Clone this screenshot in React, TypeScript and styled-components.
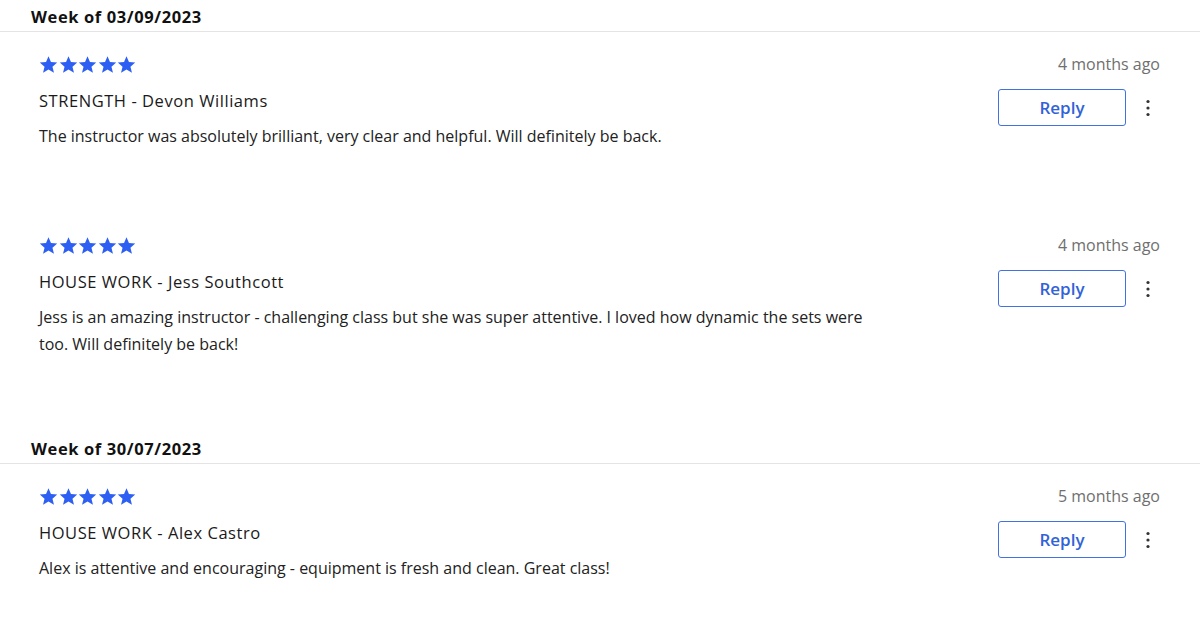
import styled, { createGlobalStyle } from 'styled-components';

const GlobalStyle = createGlobalStyle`
  html, body {
    margin: 0;
    padding: 0;
    background: #ffffff;
  }
  body {
    font-family: "Open Sans", Lato, sans-serif;
    color: #1c1c1c;
  }
`;

interface Review {
  stars: number;
  title: string;
  text: string;
  ago: string;
}

interface Week {
  label: string;
  reviews: Review[];
}

const weeks: Week[] = [
  {
    label: 'Week of 03/09/2023',
    reviews: [
      {
        stars: 5,
        title: 'STRENGTH - Devon Williams',
        text: 'The instructor was absolutely brilliant, very clear and helpful. Will definitely be back.',
        ago: '4 months ago',
      },
      {
        stars: 5,
        title: 'HOUSE WORK - Jess Southcott',
        text: 'Jess is an amazing instructor - challenging class but she was super attentive. I loved how dynamic the sets were too. Will definitely be back!',
        ago: '4 months ago',
      },
    ],
  },
  {
    label: 'Week of 30/07/2023',
    reviews: [
      {
        stars: 5,
        title: 'HOUSE WORK - Alex Castro',
        text: 'Alex is attentive and encouraging - equipment is fresh and clean. Great class!',
        ago: '5 months ago',
      },
    ],
  },
];

const Page = styled.div`
  width: 1200px;
`;

const WeekGroup = styled.section`
  margin-bottom: 11px;
`;

const WeekHeader = styled.h2`
  margin: 0;
  padding: 7px 31px 4px;
  font-size: 16.5px;
  line-height: 20px;
  letter-spacing: 0.6px;
  font-weight: 700;
  color: #111;
  border-bottom: 1px solid #e4e4e4;
`;

const ReviewRow = styled.article`
  display: flex;
  justify-content: space-between;
  padding: 20px 40px 63px 39px;
`;

const ReviewBody = styled.div`
  display: flex;
  flex-direction: column;
`;

const Stars = styled.div`
  display: flex;
  gap: 0.5px;
  height: 24px;
  align-items: center;
`;

const Title = styled.div`
  margin-top: 13px;
  font-size: 16.5px;
  line-height: 24px;
  letter-spacing: 0.55px;
  font-weight: 500;
  color: #1a1a1a;
`;

const Text = styled.p`
  margin: 10px 0 0;
  max-width: 845px;
  font-size: 16px;
  line-height: 27px;
  color: #222;
`;

const Side = styled.div`
  display: flex;
  flex-direction: column;
  align-items: flex-end;
`;

const Ago = styled.div`
  font-size: 16px;
  line-height: 24px;
  color: #6f6f6f;
`;

const Actions = styled.div`
  display: flex;
  align-items: center;
  gap: 10px;
  margin-top: 13px;
`;

const ReplyButton = styled.button`
  width: 128px;
  height: 37px;
  border: 1px solid #4272e0;
  border-radius: 3px;
  background: #fff;
  color: #3162d8;
  font-family: "Open Sans", Lato, sans-serif;
  font-size: 17px;
  font-weight: 600;
  cursor: pointer;
`;

const MoreButton = styled.button`
  width: 24px;
  height: 24px;
  padding: 0;
  border: none;
  background: transparent;
  display: flex;
  align-items: center;
  justify-content: center;
  cursor: pointer;
`;

function Star() {
  return (
    <svg width="19" height="19" viewBox="0 0 24 24">
      <path
        fill="#2d5ff3"
        d="M12 1.5l3.1 7.4 7.9.6-6 5.2 1.9 7.8L12 18.3l-6.9 4.2L7 14.7 1 9.5l7.9-.6z"
      />
    </svg>
  );
}

function Kebab() {
  return (
    <svg width="24" height="24" viewBox="0 0 24 24">
      <circle cx="12" cy="5.5" r="1.6" fill="#333" />
      <circle cx="12" cy="12" r="1.6" fill="#333" />
      <circle cx="12" cy="18.5" r="1.6" fill="#333" />
    </svg>
  );
}

function ReviewItem({ review }: { review: Review }) {
  return (
    <ReviewRow>
      <ReviewBody>
        <Stars>
          {Array.from({ length: review.stars }).map((_, i) => (
            <Star key={i} />
          ))}
        </Stars>
        <Title>{review.title}</Title>
        <Text>{review.text}</Text>
      </ReviewBody>
      <Side>
        <Ago>{review.ago}</Ago>
        <Actions>
          <ReplyButton>Reply</ReplyButton>
          <MoreButton aria-label="More">
            <Kebab />
          </MoreButton>
        </Actions>
      </Side>
    </ReviewRow>
  );
}

export default function App() {
  return (
    <Page>
      <GlobalStyle />
      {weeks.map((week) => (
        <WeekGroup key={week.label}>
          <WeekHeader>{week.label}</WeekHeader>
          {week.reviews.map((r) => (
            <ReviewItem key={r.title} review={r} />
          ))}
        </WeekGroup>
      ))}
    </Page>
  );
}
